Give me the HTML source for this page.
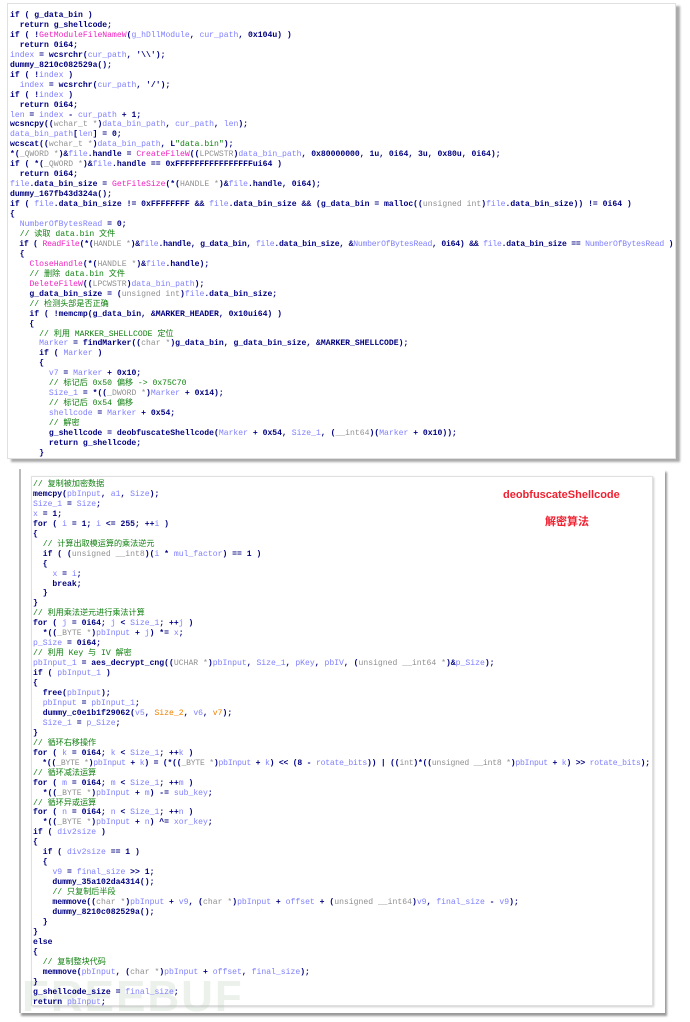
<!DOCTYPE html>
<html><head><meta charset="utf-8"><style>
body{margin:0;width:690px;height:1022px;background:#fff;position:relative;overflow:hidden}
pre{margin:0;font-family:"Liberation Mono","Noto Sans CJK SC",monospace;font-size:8.1px;line-height:9.95px;color:#000080;font-weight:bold;position:absolute;white-space:pre}
.v{color:#8080ff;font-weight:normal}
.f{color:#f020c0;font-weight:normal}
.c{color:#108010;font-weight:normal}
.g{color:#909090;font-weight:normal}
.s{color:#108010;font-weight:normal}
.o{color:#f08000;font-weight:normal}
.n{letter-spacing:-0.22px}
#p1{position:absolute;left:7px;top:3px;width:667px;height:454px;background:#fff;border:1px solid #e0e0e0;box-shadow:4px 3px 2px #aaa}
#p2o{position:absolute;left:19px;top:469px;width:644px;height:544px;background:#fff;border-left:2px solid #bbb;box-shadow:2px 3px 2px #999}
#p2{position:absolute;left:31px;top:476px;width:620px;height:528px;background:#fff;border:1px solid #e0e0e0;box-shadow:1px 1px 2px #ccc}
.red{position:absolute;color:#f02030;font-family:"Liberation Sans","Noto Sans CJK SC",sans-serif;font-weight:bold;font-size:11px}
.wm{position:absolute;left:22px;top:972px;font-family:"Liberation Sans",sans-serif;font-weight:bold;font-size:44px;color:rgba(180,200,180,.25);letter-spacing:2px}
</style></head><body>
<div id="p1"></div>
<pre style="left:10px;top:11px">if ( <span class="k">g_data_bin</span> )
  return g_shellcode;
if ( !<span class="f">GetModuleFileNameW</span>(<span class="v">g_hDllModule</span>, <span class="v">cur_path</span>, 0x104u) )
  return 0i64;
<span class="v">index</span> = wcsrchr(<span class="v">cur_path</span>, '\\');
dummy_8210c082529a();
if ( !<span class="v">index</span> )
  <span class="v">index</span> = wcsrchr(<span class="v">cur_path</span>, '/');
if ( !<span class="v">index</span> )
  return 0i64;
<span class="v">len</span> = <span class="v">index</span> - <span class="v">cur_path</span> + 1;
wcsncpy((<span class="g">wchar_t *</span>)<span class="v">data_bin_path</span>, <span class="v">cur_path</span>, <span class="v">len</span>);
<span class="v">data_bin_path</span>[<span class="v">len</span>] = 0;
wcscat((<span class="g">wchar_t *</span>)<span class="v">data_bin_path</span>, L<span class="s">"data.bin"</span>);
*(<span class="g">_QWORD *</span>)&amp;<span class="v">file</span>.handle = <span class="f">CreateFileW</span>((<span class="g">LPCWSTR</span>)<span class="v">data_bin_path</span>, 0x80000000, 1u, 0i64, 3u, 0x80u, 0i64);
if ( *(<span class="g">_QWORD *</span>)&amp;<span class="v">file</span>.handle == 0xFFFFFFFFFFFFFFFFui64 )
  return 0i64;
<span class="v">file</span>.data_bin_size = <span class="f">GetFileSize</span>(*(<span class="g">HANDLE *</span>)&amp;<span class="v">file</span>.handle, 0i64);
dummy_167fb43d324a();
if ( <span class="v">file</span>.data_bin_size != 0xFFFFFFFF &amp;&amp; <span class="v">file</span>.data_bin_size &amp;&amp; (g_data_bin = malloc((<span class="g">unsigned int</span>)<span class="v">file</span>.data_bin_size)) != 0i64 )
{
  <span class="v">NumberOfBytesRead</span> = 0;
  <span class="c">// 读取 data.bin 文件</span>
<span class="n">  if ( <span class="f">ReadFile</span>(*(<span class="g">HANDLE *</span>)&amp;<span class="v">file</span>.handle, g_data_bin, <span class="v">file</span>.data_bin_size, &amp;<span class="v">NumberOfBytesRead</span>, 0i64) &amp;&amp; <span class="v">file</span>.data_bin_size == <span class="v">NumberOfBytesRead</span> )</span>
  {
    <span class="f">CloseHandle</span>(*(<span class="g">HANDLE *</span>)&amp;<span class="v">file</span>.handle);
    <span class="c">// 删除 data.bin 文件</span>
    <span class="f">DeleteFileW</span>((<span class="g">LPCWSTR</span>)<span class="v">data_bin_path</span>);
    g_data_bin_size = (<span class="g">unsigned int</span>)<span class="v">file</span>.data_bin_size;
    <span class="c">// 检测头部是否正确</span>
    if ( !memcmp(g_data_bin, &amp;MARKER_HEADER, 0x10ui64) )
    {
      <span class="c">// 利用 MARKER_SHELLCODE 定位</span>
      <span class="v">Marker</span> = findMarker((<span class="g">char *</span>)g_data_bin, g_data_bin_size, &amp;MARKER_SHELLCODE);
      if ( <span class="v">Marker</span> )
      {
        <span class="v">v7</span> = <span class="v">Marker</span> + 0x10;
        <span class="c">// 标记后 0x50 偏移 -&gt; 0x75C70</span>
        <span class="v">Size_1</span> = *((<span class="g">_DWORD *</span>)<span class="v">Marker</span> + 0x14);
        <span class="c">// 标记后 0x54 偏移</span>
        <span class="v">shellcode</span> = <span class="v">Marker</span> + 0x54;
        <span class="c">// 解密</span>
        g_shellcode = deobfuscateShellcode(<span class="v">Marker</span> + 0x54, <span class="v">Size_1</span>, (<span class="g">__int64</span>)(<span class="v">Marker</span> + 0x10));
        return g_shellcode;
      }</pre>
<div id="p2o"></div>
<div id="p2"></div>
<div class="wm">FREEBUF</div>
<div class="red" style="left:503px;top:489px">deobfuscateShellcode</div>
<div class="red" style="left:545px;top:513px">解密算法</div>
<pre style="left:33px;top:480px"><span class="c">// 复制被加密数据</span>
memcpy(<span class="v">pbInput</span>, <span class="v">a1</span>, <span class="v">Size</span>);
<span class="v">Size_1</span> = <span class="v">Size</span>;
<span class="v">x</span> = 1;
for ( <span class="v">i</span> = 1; <span class="v">i</span> &lt;= 255; ++<span class="v">i</span> )
{
  <span class="c">// 计算出取模运算的乘法逆元</span>
  if ( (<span class="g">unsigned __int8</span>)(<span class="v">i</span> * <span class="v">mul_factor</span>) == 1 )
  {
    <span class="v">x</span> = <span class="v">i</span>;
    break;
  }
}
<span class="c">// 利用乘法逆元进行乘法计算</span>
for ( <span class="v">j</span> = 0i64; <span class="v">j</span> &lt; <span class="v">Size_1</span>; ++<span class="v">j</span> )
  *((<span class="g">_BYTE *</span>)<span class="v">pbInput</span> + <span class="v">j</span>) *= <span class="v">x</span>;
<span class="v">p_Size</span> = 0i64;
<span class="c">// 利用 Key 与 IV 解密</span>
<span class="v">pbInput_1</span> = aes_decrypt_cng((<span class="g">UCHAR *</span>)<span class="v">pbInput</span>, <span class="v">Size_1</span>, <span class="v">pKey</span>, <span class="v">pbIV</span>, (<span class="g">unsigned __int64 *</span>)&amp;<span class="v">p_Size</span>);
if ( <span class="v">pbInput_1</span> )
{
  free(<span class="v">pbInput</span>);
  <span class="v">pbInput</span> = <span class="v">pbInput_1</span>;
  dummy_c0e1b1f29062(<span class="v">v5</span>, <span class="o">Size_2</span>, <span class="v">v6</span>, <span class="o">v7</span>);
  <span class="v">Size_1</span> = <span class="v">p_Size</span>;
}
<span class="c">// 循环右移操作</span>
for ( <span class="v">k</span> = 0i64; <span class="v">k</span> &lt; <span class="v">Size_1</span>; ++<span class="v">k</span> )
<span class="n">  *((<span class="g">_BYTE *</span>)<span class="v">pbInput</span> + <span class="v">k</span>) = (*((<span class="g">_BYTE *</span>)<span class="v">pbInput</span> + <span class="v">k</span>) &lt;&lt; (8 - <span class="v">rotate_bits</span>)) | ((<span class="g">int</span>)*((<span class="g">unsigned __int8 *</span>)<span class="v">pbInput</span> + <span class="v">k</span>) &gt;&gt; <span class="v">rotate_bits</span>);</span>
<span class="c">// 循环减法运算</span>
for ( <span class="v">m</span> = 0i64; <span class="v">m</span> &lt; <span class="v">Size_1</span>; ++<span class="v">m</span> )
  *((<span class="g">_BYTE *</span>)<span class="v">pbInput</span> + <span class="v">m</span>) -= <span class="v">sub_key</span>;
<span class="c">// 循环异或运算</span>
for ( <span class="v">n</span> = 0i64; <span class="v">n</span> &lt; <span class="v">Size_1</span>; ++<span class="v">n</span> )
  *((<span class="g">_BYTE *</span>)<span class="v">pbInput</span> + <span class="v">n</span>) ^= <span class="v">xor_key</span>;
if ( <span class="v">div2size</span> )
{
  if ( <span class="v">div2size</span> == 1 )
  {
    <span class="v">v9</span> = <span class="v">final_size</span> &gt;&gt; 1;
    dummy_35a102da4314();
    <span class="c">// 只复制后半段</span>
    memmove((<span class="g">char *</span>)<span class="v">pbInput</span> + <span class="v">v9</span>, (<span class="g">char *</span>)<span class="v">pbInput</span> + <span class="v">offset</span> + (<span class="g">unsigned __int64</span>)<span class="v">v9</span>, <span class="v">final_size</span> - <span class="v">v9</span>);
    dummy_8210c082529a();
  }
}
else
{
  <span class="c">// 复制整块代码</span>
  memmove(<span class="v">pbInput</span>, (<span class="g">char *</span>)<span class="v">pbInput</span> + <span class="v">offset</span>, <span class="v">final_size</span>);
}
g_shellcode_size = <span class="v">final_size</span>;
return <span class="v">pbInput</span>;</pre>
</body></html>
